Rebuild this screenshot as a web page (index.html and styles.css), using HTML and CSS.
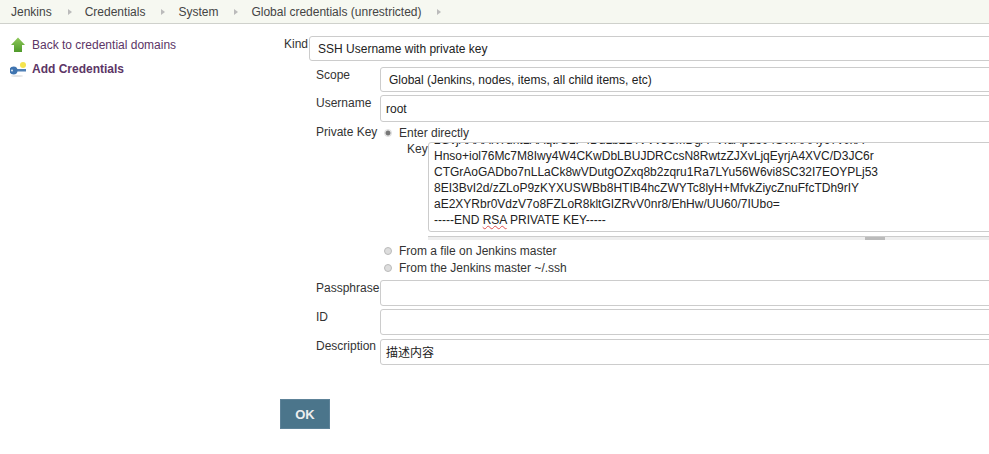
FILE: index.html
```html
<!DOCTYPE html>
<html lang="en">
<head>
    <meta charset="UTF-8">
    <title>Jenkins Credentials</title>
    <link rel="stylesheet" href="styles.css">
</head>
<body>
    <div class="breadcrumbs">
        <span class="crumb">Jenkins</span><span class="arrow"></span>
        <span class="crumb">Credentials</span><span class="arrow"></span>
        <span class="crumb">System</span><span class="arrow"></span>
        <span class="crumb">Global credentials (unrestricted)</span><span class="arrow"></span>
    </div>
    <div class="page">
        <div class="side">
            <div class="task">
                <svg class="task-icon" viewBox="0 0 16 16" width="16" height="16">
                    <defs>
                        <linearGradient id="up" x1="0" y1="0" x2="0" y2="1">
                            <stop offset="0" stop-color="#8fc95a"/>
                            <stop offset="1" stop-color="#4f9a2a"/>
                        </linearGradient>
                    </defs>
                    <path d="M8 0.5 L15 8 L12 8 L12 15 L4 15 L4 8 L1 8 Z" fill="url(#up)"/>
                </svg>
                <a class="task-link">Back to credential domains</a>
            </div>
            <div class="task">
                <svg class="task-icon" viewBox="0 0 16 16" width="16" height="16">
                    <ellipse cx="7" cy="15" rx="6" ry="1" fill="#e4e4e4"/>
                    <circle cx="13" cy="4" r="3" fill="#f5e44e"/>
                    <rect x="6" y="8" width="10" height="2.5" fill="#4f7fb5"/>
                    <ellipse cx="3.5" cy="9.5" rx="4" ry="4" fill="#3f74b0"/>
                    <circle cx="2" cy="9.5" r="1" fill="#dfe9f3"/>
                </svg>
                <a class="task-link current">Add Credentials</a>
            </div>
        </div>
        <form class="main">
            <div class="kind-row">
                <label class="kind-label">Kind</label>
                <div class="box kind-box">SSH Username with private key</div>
            </div>
            <div class="fields">
                <div class="row scope-row">
                    <label>Scope</label>
                    <div class="box select-box">Global (Jenkins, nodes, items, all child items, etc)</div>
                </div>
                <div class="row username-row">
                    <label>Username</label>
                    <div class="box">root</div>
                </div>
                <div class="row key-row">
                    <label>Private Key</label>
                    <div class="key-options">
                        <div class="radio-line"><span class="radio checked"></span>Enter directly</div>
                        <div class="key-entry">
                            <label>Key</label>
                            <div class="key-wrap">
                                <div class="key-text">
                                    <div class="clipped">2GvjAAAAKTdntLAAqtrGLP4DdLb2L4VVv3SMDgA+VIdApdo04SWAAAy97v0xA</div>
                                    <div>Hnso+iol76Mc7M8Iwy4W4CKwDbLBUJDRCcsN8RwtzZJXvLjqEyrjA4XVC/D3JC6r</div>
                                    <div>CTGrAoGADbo7nLLaCk8wVDutgOZxq8b2zqru1Ra7LYu56W6vi8SC32I7EOYPLj53</div>
                                    <div>8EI3BvI2d/zZLoP9zKYXUSWBb8HTIB4hcZWYTc8lyH+MfvkZiycZnuFfcTDh9rIY</div>
                                    <div>aE2XYRbr0VdzV7o8FZLoR8kltGIZRvV0nr8/EhHw/UU60/7IUbo=</div>
                                    <div>-----END <span class="typo">RSA</span> PRIVATE KEY-----</div>
                                </div>
                                <div class="resize-bar"><span class="grip"></span></div>
                            </div>
                        </div>
                        <div class="radio-line"><span class="radio"></span>From a file on Jenkins master</div>
                        <div class="radio-line"><span class="radio"></span>From the Jenkins master ~/.ssh</div>
                    </div>
                </div>
                <div class="row pass-row">
                    <label>Passphrase</label>
                    <div class="box"></div>
                </div>
                <div class="row id-row">
                    <label>ID</label>
                    <div class="box"></div>
                </div>
                <div class="row desc-row">
                    <label>Description</label>
                    <div class="box">描述内容</div>
                </div>
            </div>
            <button class="ok" type="button">OK</button>
        </form>
    </div>
</body>
</html>
```
FILE: styles.css
```css
html, body {
    margin: 0;
    padding: 0;
    height: 454px;
    overflow: hidden;
}

body {
    font-family: "Liberation Sans", Arial, "Noto Sans CJK SC", sans-serif;
    font-size: 12px;
    color: #333;
    background-color: #fff;
}

.breadcrumbs {
    display: flex;
    align-items: center;
    height: 23px;
    padding-left: 11px;
    background-color: #f6f8f1;
    border-bottom: 1px solid #cfd1cc;
}

.crumb {
    color: #444;
}

.arrow {
    width: 0;
    height: 0;
    margin: 0 13px 0 16px;
    border-left: 4px solid #bbb;
    border-top: 3px solid transparent;
    border-bottom: 3px solid transparent;
}

.page {
    display: flex;
}

.side {
    flex: none;
    width: 280px;
    padding: 13px 0 0 10px;
    box-sizing: border-box;
}

.task {
    display: flex;
    align-items: center;
    height: 16px;
    margin-bottom: 8px;
}

.task-icon {
    flex: none;
    margin-right: 6px;
}

.task-link {
    color: #5c3566;
}

.task-link.current {
    font-weight: bold;
}

.main {
    flex: none;
    width: 709px;
    overflow: hidden;
}

.box {
    box-sizing: border-box;
    flex: none;
    width: 800px;
    height: 26px;
    padding: 6px 5px 0;
    border: 1px solid #ccc;
    border-radius: 3px;
    color: #222;
    font-size: 12px;
    line-height: 15px;
}

.kind-row {
    display: flex;
    margin-top: 12px;
}

.kind-label {
    margin: 1px 1px 0 4px;
}

.kind-box {
    height: 25px;
    padding: 5px 8px 0;
}

.fields {
    padding-left: 36px;
}

.row {
    display: flex;
}

.row > label {
    flex: none;
    width: 64px;
    padding-top: 1px;
}

.scope-row {
    margin-top: 6px;
}

.select-box {
    height: 25px;
    padding: 5px 8px 0;
}

.username-row {
    margin-top: 3px;
}

.username-row .box {
    height: 27px;
}

.key-row {
    margin-top: 2px;
}

.key-options {
    flex: 1;
    min-width: 0;
}

.radio-line {
    display: flex;
    align-items: center;
    height: 17px;
    color: #333;
}

.radio {
    flex: none;
    box-sizing: border-box;
    width: 8px;
    height: 8px;
    margin: 0 7px 0 4px;
    border: 1px solid #bbb;
    border-radius: 50%;
    background-color: #ddd;
}

.radio.checked {
    border-color: #ddd;
    background: radial-gradient(circle, #777 0 2px, #e8e8e8 3px);
}

.key-entry {
    display: flex;
    margin: 1px 0 2px;
}

.key-entry label {
    flex: none;
    width: 48px;
    padding-left: 27px;
    box-sizing: border-box;
}

.key-wrap {
    flex: none;
    width: 800px;
}

.key-text {
    box-sizing: border-box;
    height: 90px;
    padding: 0 5px;
    overflow: hidden;
    border: 1px solid #ccc;
    border-radius: 3px;
    color: #222;
    font-size: 12px;
    line-height: 16px;
    white-space: nowrap;
}

.clipped {
    margin-top: -11px;
}

.typo {
    text-decoration: underline wavy #e05050 1px;
}

.resize-bar {
    display: flex;
    justify-content: flex-start;
    height: 3px;
    margin-top: 4px;
    border-top: 1px solid #ccc;
    background-color: #eee;
}

.grip {
    width: 20px;
    height: 3px;
    margin-left: 437px;
    background-color: #bbb;
}

.pass-row {
    margin-top: 4px;
}

.id-row {
    margin-top: 3px;
}

.desc-row {
    margin-top: 4px;
}

.desc-row > label {
    padding-top: 0;
}

.ok {
    display: block;
    width: 50px;
    height: 30px;
    margin-top: 34px;
    padding: 0;
    border: 1px solid #5d8298;
    background-color: #4b758b;
    color: #eee;
    font-family: inherit;
    font-size: 13px;
    font-weight: bold;
}
```
